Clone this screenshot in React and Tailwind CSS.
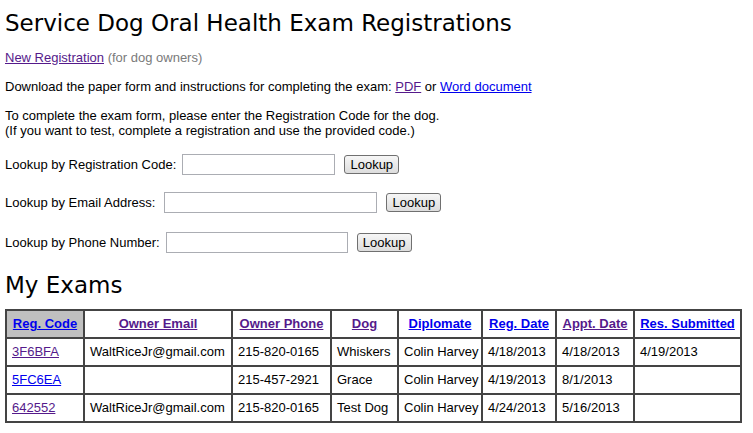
import React from 'react';

const PURPLE = 'text-[#551a8b] underline';
const BLUE = 'text-[#0000ee] underline';

const headers = [
  { label: 'Reg. Code', w: 'w-[78px]', visited: false, sorted: true },
  { label: 'Owner Email', w: 'w-[148px]', visited: true },
  { label: 'Owner Phone', w: 'w-[99px]', visited: true },
  { label: 'Dog', w: 'w-[67px]', visited: true },
  { label: 'Diplomate', w: 'w-[84px]', visited: false },
  { label: 'Reg. Date', w: 'w-[74px]', visited: false },
  { label: 'Appt. Date', w: 'w-[78px]', visited: true },
  { label: 'Res. Submitted', w: 'w-[107px]', visited: false },
];

const exams = [
  { code: '3F6BFA', visited: true, email: 'WaltRiceJr@gmail.com', phone: '215-820-0165', dog: 'Whiskers', diplomate: 'Colin Harvey', reg: '4/18/2013', appt: '4/18/2013', res: '4/19/2013' },
  { code: '5FC6EA', visited: false, email: '', phone: '215-457-2921', dog: 'Grace', diplomate: 'Colin Harvey', reg: '4/19/2013', appt: '8/1/2013', res: '' },
  { code: '642552', visited: true, email: 'WaltRiceJr@gmail.com', phone: '215-820-0165', dog: 'Test Dog', diplomate: 'Colin Harvey', reg: '4/24/2013', appt: '5/16/2013', res: '' },
];

function LookupRow({ label, inputW, gap, mt }) {
  return (
    <div className={`flex items-center h-[21px] ${mt}`}>
      <span>{label}</span>
      <input type="text" className={`${inputW} ${gap} h-[21px] border border-[#abadb3] bg-white`} />
      <button className="ml-[9px] h-[19px] w-[55px] rounded-[3px] border border-[#707070] bg-gradient-to-b from-[#f6f6f6] to-[#dddddd] text-[13px] leading-none text-black">
        Lookup
      </button>
    </div>
  );
}

function App() {
  const cell = 'border border-[#444] px-[5px] py-[5px] leading-[16px] whitespace-nowrap overflow-hidden';
  return (
    <div className="min-h-screen bg-white px-[5px] text-[13px] leading-[15px] text-black" style={{ fontFamily: '"Liberation Sans", Arial, sans-serif' }}>
      <h1 className="pt-[9px] text-[23px] leading-[28px] font-normal" style={{ fontFamily: '"DejaVu Sans", Verdana, sans-serif' }}>
        Service Dog Oral Health Exam Registrations
      </h1>

      <p className="mt-[13px]">
        <a href="#" className={PURPLE}>New Registration</a>{' '}
        <span className="text-[#7a7a7a]">(for dog owners)</span>
      </p>

      <p className="mt-[14px]">
        Download the paper form and instructions for completing the exam:{' '}
        <a href="#" className={PURPLE}>PDF</a> or{' '}
        <a href="#" className={BLUE}>Word document</a>
      </p>

      <p className="mt-[14px]">
        To complete the exam form, please enter the Registration Code for the dog.
        <br />
        (If you want to test, complete a registration and use the provided code.)
      </p>

      <LookupRow label="Lookup by Registration Code:" inputW="w-[153px]" gap="ml-[6px]" mt="mt-[16px]" />
      <LookupRow label="Lookup by Email Address:" inputW="w-[213px]" gap="ml-[9px]" mt="mt-[17px]" />
      <LookupRow label="Lookup by Phone Number:" inputW="w-[182px]" gap="ml-[6px]" mt="mt-[19px]" />

      <h2 className="mt-[18px] text-[23px] leading-[28px] font-normal" style={{ fontFamily: '"DejaVu Sans", Verdana, sans-serif' }}>
        My Exams
      </h2>

      <table className="mt-[10px] w-[737px] table-fixed border-separate border-spacing-0 border border-[#444]">
        <thead>
          <tr>
            {headers.map((h) => (
              <th key={h.label} className={`${cell} ${h.w} text-center font-bold ${h.sorted ? 'bg-[#c0c0c0]' : ''}`}>
                <a href="#" className={h.visited ? PURPLE : BLUE}>{h.label}</a>
              </th>
            ))}
          </tr>
        </thead>
        <tbody>
          {exams.map((e) => (
            <tr key={e.code}>
              <td className={cell}>
                <a href="#" className={e.visited ? PURPLE : BLUE}>{e.code}</a>
              </td>
              <td className={cell}>{e.email}</td>
              <td className={cell}>{e.phone}</td>
              <td className={cell}>{e.dog}</td>
              <td className={cell}>{e.diplomate}</td>
              <td className={cell}>{e.reg}</td>
              <td className={cell}>{e.appt}</td>
              <td className={cell}>{e.res}</td>
            </tr>
          ))}
        </tbody>
      </table>
    </div>
  );
}

export default App;
